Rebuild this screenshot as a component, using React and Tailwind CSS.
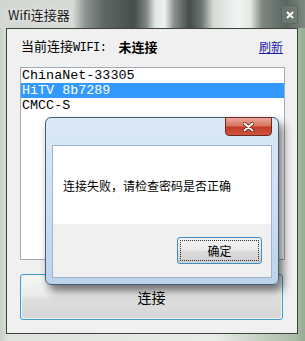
export default function App() {
  const cjk = { fontFamily: '"Noto Sans CJK SC", "Noto Sans", sans-serif' };
  const mono = { fontFamily: '"Liberation Mono", "Noto Sans CJK SC", monospace' };
  const items = ['ChinaNet-33305', 'HiTV 8b7289', 'CMCC-S'];

  return (
    <div className="relative w-[305px] h-[341px] overflow-hidden flex flex-col bg-[linear-gradient(to_right,#c9d0c6_0%,#dfe3de_3%,#e4e7e3_40%,#e9ece8_70%,#a9bca6_97%,#96ad92_100%)]" style={cjk}>
      {/* title bar */}
      <div className="relative h-[28px] shrink-0 flex items-center pl-[8px] bg-[linear-gradient(to_right,#d3d7d3_0%,#d6d9d5_24%,#8a938f_28%,#5e6764_34%,#464e4b_44%,#7f8884_48%,#e4e8e5_51%,#eef1ee_54%,#8a9390_57%,#444c4a_62%,#6a7470_66%,#d5dad6_70%,#f2f4f2_78%,#e6e9e6_82%,#7c8781_86%,#59655f_94%,#7c8a80_100%)]">
        <span className="text-[13px] leading-none text-[#1a1a1a] [text-shadow:0_0_6px_rgba(255,255,255,0.9)]">Wifi连接器</span>
        <div className="absolute left-[281px] top-[5px] w-[17px] h-[19px] rounded-[3px] border border-[#5a6460] bg-[rgba(120,130,125,0.55)] flex items-center justify-center">
          <svg width="8" height="8" viewBox="0 0 8 8">
            <path d="M1 1 L7 7 M7 1 L1 7" stroke="#ffffff" strokeWidth="1.8" />
          </svg>
        </div>
      </div>

      {/* client area */}
      <div className="ml-[6px] w-[292px] h-[306px] border border-[#3a4438] bg-[#f0f0f0] flex flex-col">
        <div className="mt-[10px] h-[15px] flex items-center pl-[14px] pr-[14px] text-[13px] leading-none text-black">
          <span>当前连接<span className="text-[12px] tracking-[-0.5px]" style={mono}>WIFI:</span></span>
          <span className="ml-[12px] font-bold">未连接</span>
          <span className="ml-auto text-[12px] underline text-[#1b1ba8]">刷新</span>
        </div>

        <div className="mt-[13px] ml-[13px] w-[265px] h-[193px] border border-[#a5a9b0] bg-white">
          {items.map((t, i) => (
            <div
              key={t}
              className={`h-[15px] pl-[1px] text-[13.4px] leading-[15px] whitespace-pre ${i === 1 ? 'bg-[#3399ff] text-white' : 'text-black'}`}
              style={mono}
            >
              {t}
            </div>
          ))}
        </div>

        <div className="mt-[14px] ml-[13px] w-[263px] h-[46px] rounded-[3px] border border-[#3c9fcf] p-px">
          <div className="w-full h-full rounded-[2px] flex items-center justify-center text-[14px] text-black bg-[linear-gradient(to_bottom,#f5f6f6_0%,#ececec_45%,#dedede_55%,#d6d6d6_100%)]">
            连接
          </div>
        </div>
      </div>

      {/* message dialog */}
      <div className="absolute left-[45px] top-[117px] w-[234px] h-[168px] rounded-[6px] border border-[#4a5b70] shadow-[4px_6px_10px_rgba(0,0,0,0.55)] bg-[linear-gradient(to_bottom,#dbe9f7_0%,#cfe2f5_40%,#bcd3ec_100%)] p-[6px] pt-[27px]">
        <div className="absolute left-[179px] top-[-1px] w-[47px] h-[19px] rounded-b-[4px] border border-[#6e2a22] bg-[linear-gradient(to_bottom,#eaa99c_0%,#d9735f_45%,#c13d28_55%,#d2553f_100%)] flex items-center justify-center">
          <svg width="11" height="10" viewBox="0 0 11 10">
            <path d="M1.5 1.5 L9.5 8.5 M9.5 1.5 L1.5 8.5" stroke="#5a1a12" strokeWidth="3.4" strokeLinecap="round" />
            <path d="M1.5 1.5 L9.5 8.5 M9.5 1.5 L1.5 8.5" stroke="#ffffff" strokeWidth="1.9" strokeLinecap="round" />
          </svg>
        </div>
        <div className="w-full h-full border border-[#9fb4cc] flex flex-col bg-white">
          <div className="h-[78px] shrink-0 bg-white flex items-center pl-[10px] pt-[1px] text-[12px] text-black">
            连接失败，请检查密码是否正确
          </div>
          <div className="flex-1 bg-[#f0f0f0] flex justify-end pt-[13px] pr-[9px]">
            <div className="w-[85px] h-[27px] rounded-[3px] border border-[#3c8fc6] p-[2px] bg-[linear-gradient(to_bottom,#f4f4f4_0%,#ebebeb_48%,#dcdcdc_52%,#cfcfcf_100%)]">
              <div className="w-full h-full border border-dotted border-[#303030] flex items-center justify-center text-[12px] text-black">
                确定
              </div>
            </div>
          </div>
        </div>
      </div>
    </div>
  );
}
